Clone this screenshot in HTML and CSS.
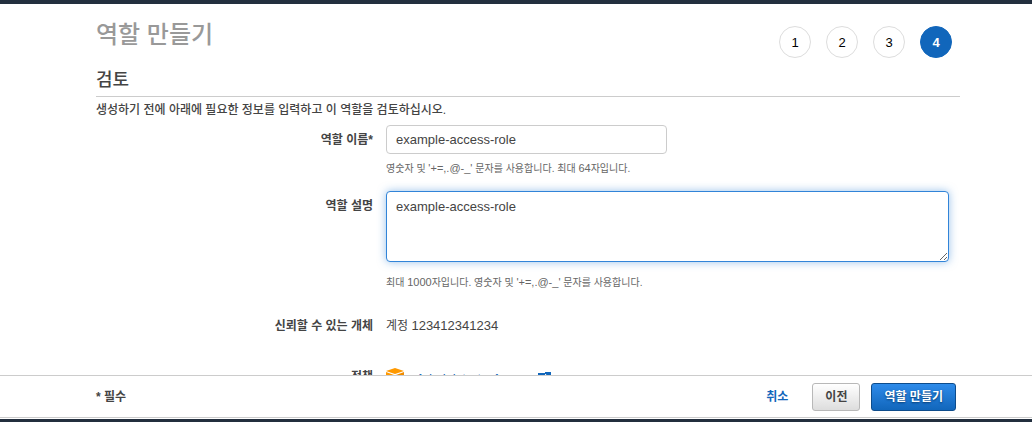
FILE: index.html
```html
<!DOCTYPE html>
<html lang="ko">

<head>
    <meta charset="UTF-8">
    <meta name="viewport" content="width=device-width, initial-scale=1.0">
    <title>역할 만들기</title>
    <link rel="stylesheet" href="styles.css">
</head>

<body>
    <form class="page">
        <main class="content">
            <div class="header">
                <h1>역할 만들기</h1>
                <ol class="steps">
                    <li>1</li>
                    <li>2</li>
                    <li>3</li>
                    <li class="active">4</li>
                </ol>
            </div>
            <h2>검토</h2>
            <p class="intro">생성하기 전에 아래에 필요한 정보를 입력하고 이 역할을 검토하십시오.</p>

            <div class="row">
                <label class="label" for="name">역할 이름*</label>
                <div class="field">
                    <input type="text" id="name" class="box" value="example-access-role">
                    <p class="hint">영숫자 및 <span class="chars">'+=,.@-_'</span> 문자를 사용합니다. 최대 <span class="chars">64</span>자입니다.</p>
                </div>
            </div>
            <div class="row">
                <label class="label" for="description">역할 설명</label>
                <div class="field">
                    <textarea id="description" class="box">example-access-role</textarea>
                    <p class="hint">최대 <span class="chars">1000</span>자입니다. 영숫자 및 <span class="chars">'+=,.@-_'</span> 문자를 사용합니다.</p>
                </div>
            </div>
            <div class="row info">
                <span class="label">신뢰할 수 있는 개체</span>
                <div class="field">계정 <span class="number">123412341234</span></div>
            </div>
            <div class="row info">
                <span class="label">정책</span>
                <div class="field policy">
                    <svg class="cube" width="18" height="22" viewBox="0 0 18 22">
                        <path fill="#f90" d="M9 0l9 3-9 3-9-3z" />
                        <path fill="#f90" d="M0 4l8 3v13l-8-4z" />
                        <path fill="#f08c00" d="M18 4l-8 3v13l8-4z" />
                    </svg>
                    <a href="#">AdministratorAccess
                        <svg width="13" height="11" viewBox="0 0 13 11" fill="none" stroke="#1166bb" stroke-width="2">
                            <path d="M7 2H1v8h9V7M5 7l6-6M7 1h5v5" />
                        </svg>
                    </a>
                </div>
            </div>
        </main>

        <footer class="footer">
            <span class="required">* 필수</span>
            <a href="#" class="cancel">취소</a>
            <button type="button" class="btn">이전</button>
            <button type="submit" class="btn primary">역할 만들기</button>
        </footer>
    </form>
</body>

</html>
```

FILE: styles.css
```css
* {
    box-sizing: border-box;
}

body {
    margin: 0;
    font-family: "Liberation Sans", "Noto Sans CJK KR", sans-serif;
    font-size: 12px;
    line-height: 18px;
    color: #444;
    background: #fff;
}

h1, h2, p, ol {
    margin: 0;
    padding: 0;
    font-weight: 500;
}

a {
    color: #1166bb;
    text-decoration: none;
}

.page {
    display: flex;
    flex-direction: column;
    height: 100vh;
    border-top: 4px solid #232f3e;
    border-bottom: 3px solid #232f3e;
}

.content {
    flex: 1;
    min-height: 0;
    overflow: hidden;
    padding: 16px 72px 0 96px;
}

.header {
    display: flex;
    justify-content: space-between;
    align-items: flex-start;
    padding-right: 8px;
}

h1 {
    font-size: 24px;
    line-height: 30px;
    color: #999;
}

.steps {
    display: flex;
    gap: 15px;
    padding-top: 6px;
    list-style: none;
}

.steps li {
    width: 32px;
    height: 32px;
    border: 1px solid #ddd;
    border-radius: 50%;
    font-size: 13px;
    line-height: 31px;
    text-align: center;
    color: #000;
}

.steps .active {
    border-color: #1166bb;
    background: #1166bb;
    color: #fff;
    font-weight: bold;
}

h2 {
    padding: 9px 0 3px;
    border-bottom: 1px solid #ccc;
    font-size: 18px;
    line-height: 26px;
}

.intro {
    padding: 4px 0 6px;
}

.row {
    display: flex;
    gap: 13px;
    margin-bottom: 13px;
}

.label {
    width: 277px;
    padding-top: 6px;
    text-align: right;
    font-weight: bold;
}

.field {
    flex: 1;
    min-width: 0;
}

.box {
    display: block;
    width: 49%;
    height: 29px;
    padding: 0 9px;
    border: 1px solid #ccc;
    border-radius: 4px;
    font-family: inherit;
    font-size: 13px;
    color: #444;
    outline: none;
}

textarea.box {
    width: calc(100% - 11px);
    height: 71px;
    margin-bottom: 6px;
    padding: 6px 9px;
    border-color: #3184d8;
    line-height: 18px;
    box-shadow: 0 0 8px rgba(49, 132, 216, 0.5);
}

.hint {
    padding-top: 5px;
    font-size: 10px;
    font-weight: normal;
    color: #666;
}

.hint .chars {
    font-size: 11px;
}

.info {
    margin: 25px 0 33px;
}

.info .label {
    padding-top: 0;
}

.number {
    font-size: 13px;
}

.policy {
    display: flex;
    align-items: flex-start;
    gap: 12px;
    font-size: 13px;
    line-height: 22px;
}

.footer {
    display: flex;
    align-items: center;
    height: 43px;
    margin-bottom: 1px;
    padding: 0 76px 0 96px;
    border-top: 1px solid #ccc;
    border-bottom: 1px solid #ccc;
    background: #fff;
}

.required {
    flex: 1;
    font-weight: bold;
}

.cancel {
    margin-right: 24px;
    font-weight: bold;
}

.btn {
    height: 28px;
    padding: 0 12px 2px;
    border: 1px solid #b8b8b8;
    border-radius: 3px;
    background: linear-gradient(#fff, #ddd);
    font-family: inherit;
    font-size: 12px;
    font-weight: bold;
    color: #444;
}

.primary {
    margin-left: 11px;
    border-color: #0d4c8c;
    background: linear-gradient(#2e8bea, #1166bb);
    color: #fff;
    text-shadow: 0 1px 2px #073b70;
}
```
